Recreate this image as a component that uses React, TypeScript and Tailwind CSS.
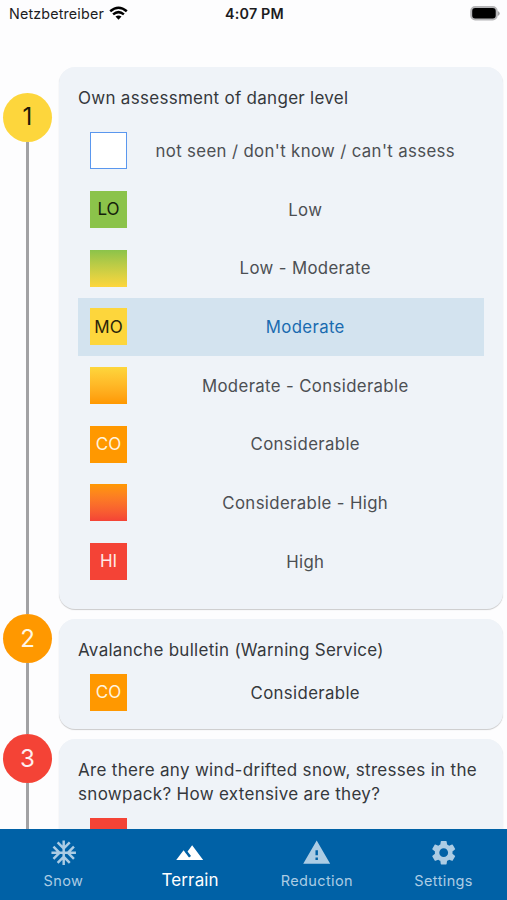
import { MdAcUnit, MdSettings, MdTerrain, MdWarning } from "react-icons/md";
import type { IconType } from "react-icons";

type Level = { code?: string; label: string; swatch: string; selected?: boolean };

const levels: Level[] = [
  { label: "not seen / don't know / can't assess", swatch: "bg-white border border-[#5a97ee]" },
  { code: "LO", label: "Low", swatch: "bg-[#8bc34a] text-[#14200a]" },
  { label: "Low - Moderate", swatch: "bg-linear-to-b from-[#8bc34a] to-[#fdd63c]" },
  { code: "MO", label: "Moderate", swatch: "bg-[#fdd63c] text-[#2b240a]", selected: true },
  { label: "Moderate - Considerable", swatch: "bg-linear-to-b from-[#fdd63c] to-[#ff9800]" },
  { code: "CO", label: "Considerable", swatch: "bg-[#ff9800] text-[#fff3df]" },
  { label: "Considerable - High", swatch: "bg-linear-to-b from-[#ff9800] to-[#f44336]" },
  { code: "HI", label: "High", swatch: "bg-[#f44336] text-[#ffe9e6]" },
];

const tabs: { label: string; Icon: IconType; active?: boolean }[] = [
  { label: "Snow", Icon: MdAcUnit },
  { label: "Terrain", Icon: MdTerrain, active: true },
  { label: "Reduction", Icon: MdWarning },
  { label: "Settings", Icon: MdSettings },
];

function Swatch({ className, code }: { className: string; code?: string }) {
  return (
    <div className={`flex size-[37px] shrink-0 items-center justify-center text-[17px] ${className}`}>
      {code}
    </div>
  );
}

function Row({ level }: { level: Level }) {
  return (
    <div className={`flex h-[58.65px] items-center pl-3 ${level.selected ? "bg-[#d3e3ef] text-[#1a6bb0]" : "text-[#4c4f53]"}`}>
      <Swatch className={level.swatch} code={level.code} />
      <span className="flex-1 pt-px text-center text-[16.8px] tracking-[0.36px]">{level.label}</span>
    </div>
  );
}

function Badge({ value, className }: { value: number; className: string }) {
  return (
    <div className={`flex size-[49px] shrink-0 items-center justify-center rounded-full text-2xl ${className}`}>
      {value}
    </div>
  );
}

function Line({ className }: { className: string }) {
  return <div className={`w-[2.5px] bg-[#a2a2a4] ${className}`} />;
}

const card = "rounded-[16px] bg-[#eff3f8] px-[19.5px] shadow-[0_1px_1px_rgba(0,0,0,0.2)]";

export default function App() {
  return (
    <div className="flex h-[900px] w-[507px] flex-col overflow-hidden bg-[#fdfdfe] font-['Inter','Liberation_Sans',sans-serif]">
      <header className="grid h-[27px] shrink-0 grid-cols-3 items-center pl-[9px] pr-[7px] text-[#1c1c1e]">
        <div className="flex items-center gap-[5px] text-[14.3px] tracking-[0.16px]">
          <span>Netzbetreiber</span>
          <svg width="19" height="15" viewBox="0 0 19 15" fill="none" stroke="#000" strokeWidth="2.5">
            <path d="M1.2 5.3Q9.5 -1.8 17.8 5.3" />
            <path d="M4.1 8.4Q9.5 3.8 14.9 8.4" />
            <path d="M6.5 10.6Q9.5 8.2 12.5 10.6L9.5 13.7Z" fill="#000" stroke="none" />
          </svg>
        </div>
        <span className="text-center text-[14.3px] font-semibold tracking-[0.2px]">4:07 PM</span>
        <svg className="justify-self-end" width="31" height="15" viewBox="0 0 31 15">
          <rect x="2.2" y="1" width="25.5" height="12.5" rx="4" fill="#000" stroke="#b5b5b7" strokeWidth="2" />
          <path d="M28.7 5v5Q30.7 9.2 30.7 7.5T28.7 5Z" fill="#a0a0a2" />
        </svg>
      </header>

      <main className="flex min-h-0 flex-1 overflow-hidden">
        <div className="flex w-[58.5px] shrink-0 flex-col items-center pr-[3.5px] pt-[65.5px]">
          <Badge value={1} className="bg-[#fdd63c] text-[#1d1a08]" />
          <Line className="h-[472.5px] shrink-0" />
          <Badge value={2} className="bg-[#ff9800] text-[#fff6e6]" />
          <Line className="h-[71px] shrink-0" />
          <Badge value={3} className="bg-[#f44336] text-[#ffefed]" />
          <Line className="flex-1" />
        </div>

        <div className="mr-[4px] flex flex-1 flex-col gap-[10.5px] pt-10 text-[17px] leading-[24.5px] text-[#35383c]">
          <section className={`${card} h-[541.5px] shrink-0 pt-[18.5px]`}>
            <h2 className="mb-[11.6px] tracking-[0.28px]">Own assessment of danger level</h2>
            {levels.map((level) => (
              <Row key={level.label} level={level} />
            ))}
          </section>

          <section className={`${card} h-[109.5px] shrink-0 pt-[18.5px]`}>
            <h2 className="mb-[12px] tracking-[0.29px]">Avalanche bulletin (Warning Service)</h2>
            <div className="flex items-center pl-3">
              <Swatch className="bg-[#ff9800] text-[#fff3df]" code="CO" />
              <span className="flex-1 pt-px text-center text-[16.8px] tracking-[0.36px]">Considerable</span>
            </div>
          </section>

          <section className={`${card} h-[180px] shrink-0 pt-[18.5px]`}>
            <h2 className="mb-[11px] whitespace-nowrap tracking-[0.31px]">
              Are there any wind-drifted snow, stresses in the
              <br />
              snowpack? How extensive are they?
            </h2>
            <div className="pl-3">
              <Swatch className="bg-[#f44336]" />
            </div>
          </section>
        </div>
      </main>

      <nav className="grid h-[71px] shrink-0 grid-cols-4 bg-[#0061a6]">
        {tabs.map(({ label, Icon, active }) => (
          <div key={label} className={`flex flex-col items-center pt-[9px] ${active ? "text-white" : "text-[#accce4]"}`}>
            <Icon size={29.4} />
            <span className={active ? "pt-px text-[17px] leading-6 tracking-[0.15px]" : "pt-[2px] text-[14.5px] leading-6 tracking-[0.38px]"}>{label}</span>
          </div>
        ))}
      </nav>
    </div>
  );
}
